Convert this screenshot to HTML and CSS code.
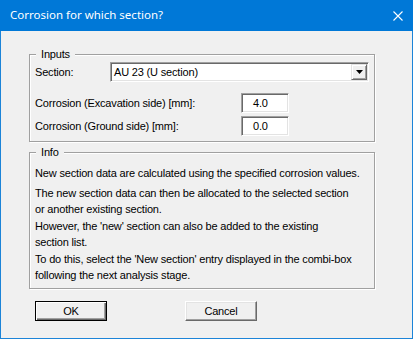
FILE: index.html
```html
<!DOCTYPE html>
<html>
<head>
<meta charset="utf-8">
<link rel="stylesheet" href="styles.css">
</head>
<body>
<div class="window">
  <div class="titlebar">
    <span class="title">Corrosion for which section?</span>
    <svg class="close" width="10" height="10" viewBox="0 0 10 10"><path d="M0.5 0.5 L9.5 9.5 M9.5 0.5 L0.5 9.5" stroke="#fff" stroke-width="1.1" fill="none"/></svg>
  </div>
  <div class="client">
    <div class="group inputs">
      <span class="legend">Inputs</span>
      <div class="row row-combo">
        <span class="label label-short">Section:</span>
        <div class="combo">
          <span class="combo-text">AU 23 (U section)</span>
          <span class="drop"><svg width="7" height="4" viewBox="0 0 7 4"><path d="M0 0 H7 L3.5 4 Z" fill="#000"/></svg></span>
        </div>
      </div>
      <div class="row row-edit first">
        <span class="label label-long">Corrosion (Excavation side) [mm]:</span>
        <div class="edit">4.0</div>
      </div>
      <div class="row row-edit">
        <span class="label label-long">Corrosion (Ground side) [mm]:</span>
        <div class="edit">0.0</div>
      </div>
    </div>
    <div class="group info">
      <span class="legend">Info</span>
      <p class="p1">New section data are calculated using the specified corrosion values.</p>
      <p>The new section data can then be allocated to the selected section<br>or another existing section.</p>
      <p>However, the 'new' section can also be added to the existing<br>section list.</p>
      <p>To do this, select the 'New section' entry displayed in the combi-box<br>following the next analysis stage.</p>
    </div>
    <div class="buttons">
      <div class="btn btn-default">OK</div>
      <div class="btn btn-cancel">Cancel</div>
    </div>
  </div>
</div>
</body>
</html>
```

FILE: styles.css
```css
html, body {
  margin: 0;
  padding: 0;
  background: #f0f0f0;
}
.window {
  width: 413px;
  height: 339px;
  box-sizing: border-box;
  border: 1px solid #1c84d8;
  border-top: none;
  background: #f0f0f0;
  font-family: "Liberation Sans", Arial, sans-serif;
  font-size: 11px;
  letter-spacing: -0.17px;
  color: #000;
}
.titlebar {
  height: 31px;
  margin: 0 -1px;
  background: #0078d7;
  display: flex;
  align-items: center;
  justify-content: space-between;
  padding: 0 10px 0 10px;
  box-sizing: border-box;
}
.title {
  color: #fff;
  font-family: "Noto Sans", "Open Sans", sans-serif;
  font-size: 11.5px;
  letter-spacing: 0;
  position: relative;
  top: -1px;
}
.group {
  position: relative;
  width: 346px;
  box-sizing: border-box;
  border: 1px solid #a0a0a0;
  box-shadow: 1px 1px 0 #fff, inset 1px 1px 0 #fff;
}
.client {
  padding: 23px 0 0 28px;
}
.legend {
  position: absolute;
  top: -8px;
  left: 6px;
  padding: 0 5px 0 5px;
  background: #f0f0f0;
  line-height: 14px;
}
.inputs {
  height: 88px;
  padding: 7px 0 0 5px;
}
.row {
  display: flex;
  align-items: center;
}
.label-short {
  width: 75px;
}
.label-long {
  width: 206px;
}
.combo {
  width: 259px;
  height: 20px;
  box-sizing: border-box;
  background: #fff;
  border-top: 1px solid #a0a0a0;
  border-left: 1px solid #a0a0a0;
  border-right: 1px solid #fff;
  border-bottom: 1px solid #fff;
  box-shadow: inset 1px 1px 0 #696969, inset -1px -1px 0 #e3e3e3;
  display: flex;
  align-items: center;
  justify-content: space-between;
  padding: 0 1px 0 3px;
}
.combo-text {
  line-height: 14px;
}
.drop {
  width: 16px;
  height: 16px;
  box-sizing: border-box;
  background: #f0f0f0;
  border-top: 1px solid #e3e3e3;
  border-left: 1px solid #e3e3e3;
  border-right: 1px solid #696969;
  border-bottom: 1px solid #696969;
  box-shadow: inset 1px 1px 0 #fff, inset -1px -1px 0 #a0a0a0;
  display: flex;
  align-items: center;
  justify-content: center;
}
.row-edit.first {
  margin-top: 11px;
}
.row-edit + .row-edit {
  margin-top: 3px;
}
.edit {
  width: 48px;
  height: 20px;
  box-sizing: border-box;
  background: #fff;
  border-top: 1px solid #a0a0a0;
  border-left: 1px solid #a0a0a0;
  border-right: 1px solid #fff;
  border-bottom: 1px solid #fff;
  box-shadow: inset 1px 1px 0 #696969, inset -1px -1px 0 #e3e3e3;
  padding-left: 11px;
  line-height: 18px;
}
.info {
  margin-top: 10px;
  height: 137px;
  padding: 12px 0 0 5px;
}
.info p {
  margin: 0 0 1px 0;
  line-height: 16px;
}
.info p.p1 {
  margin-bottom: 4px;
}
.buttons {
  display: flex;
  padding: 12px 0 0 6px;
  gap: 78px;
}
.btn {
  width: 72px;
  height: 20px;
  box-sizing: border-box;
  background: #f0f0f0;
  display: flex;
  align-items: center;
  justify-content: center;
  border-top: 1px solid #fff;
  border-left: 1px solid #fff;
  border-right: 1px solid #696969;
  border-bottom: 1px solid #696969;
  box-shadow: inset -1px -1px 0 #a0a0a0, inset 1px 1px 0 #e3e3e3;
}
.btn-default {
  border: 1px solid #000;
  box-shadow: inset 1px 1px 0 #fff, inset -1px -1px 0 #696969, inset -2px -2px 0 #a0a0a0;
}
```
